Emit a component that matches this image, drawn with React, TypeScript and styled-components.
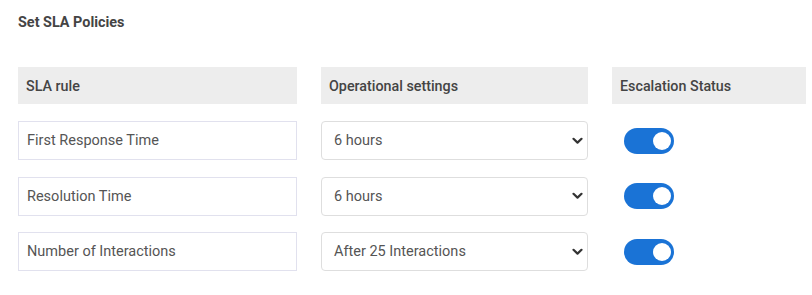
import styled, { createGlobalStyle } from "styled-components";

const GlobalStyle = createGlobalStyle`
    body {
        margin: 0;
        background: #ffffff;
        font-family: Roboto, "Liberation Sans", sans-serif;
    }
`;

const Page = styled.div`
    padding: 15px 0 0 18px;
`;

const Title = styled.h2`
    margin: 0 0 36px;
    font-size: 14.4px;
    line-height: 16px;
    font-weight: 700;
    color: #444444;
`;

const Table = styled.div`
    display: grid;
    grid-template-columns: 279px 267px 194px;
    column-gap: 24px;
    row-gap: 16.5px;
    align-items: center;
`;

const HeaderCell = styled.div`
    height: 37px;
    display: flex;
    align-items: center;
    padding-left: 8px;
    margin-bottom: 0.5px;
    background: #ededed;
    font-size: 14.3px;
    font-weight: 500;
    color: #444444;
`;

const RuleBox = styled.div`
    height: 39px;
    box-sizing: border-box;
    display: flex;
    align-items: center;
    padding-left: 8px;
    border: 1px solid #e1e1ee;
    font-size: 14.5px;
    color: #555555;
`;

const SelectBox = styled.div`
    height: 39px;
    box-sizing: border-box;
    display: flex;
    align-items: center;
    justify-content: space-between;
    padding: 0 4px 0 12px;
    border: 1px solid #dedede;
    border-radius: 4px;
    font-size: 14.5px;
    color: #555555;
`;

const Toggle = styled.div<{ on: boolean }>`
    width: 50px;
    height: 26px;
    margin-left: 12px;
    box-sizing: border-box;
    border-radius: 13px;
    background: ${(p) => (p.on ? "#1a73d6" : "#cccccc")};
    display: flex;
    align-items: center;
    justify-content: ${(p) => (p.on ? "flex-end" : "flex-start")};
    padding: 0 3px;

    span {
        width: 18px;
        height: 18px;
        border-radius: 50%;
        background: #ffffff;
    }
`;

function Chevron() {
    return (
        <svg width="11" height="8" viewBox="0 0 11 8">
            <path
                d="M1.5 1.8 L5.5 5.6 L9.5 1.8"
                fill="none"
                stroke="#333333"
                strokeWidth="2.2"
                strokeLinecap="round"
                strokeLinejoin="round"
            />
        </svg>
    );
}

const rules = [
    { name: "First Response Time", value: "6 hours" },
    { name: "Resolution Time", value: "6 hours" },
    { name: "Number of Interactions", value: "After 25 Interactions" },
];

export default function App() {
    return (
        <Page>
            <GlobalStyle />
            <Title>Set SLA Policies</Title>
            <Table>
                <HeaderCell>SLA rule</HeaderCell>
                <HeaderCell>Operational settings</HeaderCell>
                <HeaderCell>Escalation Status</HeaderCell>
                {rules.map((r) => (
                    <>
                        <RuleBox key={r.name + "-n"}>{r.name}</RuleBox>
                        <SelectBox key={r.name + "-s"}>
                            {r.value}
                            <Chevron />
                        </SelectBox>
                        <div key={r.name + "-t"}>
                            <Toggle on>
                                <span />
                            </Toggle>
                        </div>
                    </>
                ))}
            </Table>
        </Page>
    );
}
